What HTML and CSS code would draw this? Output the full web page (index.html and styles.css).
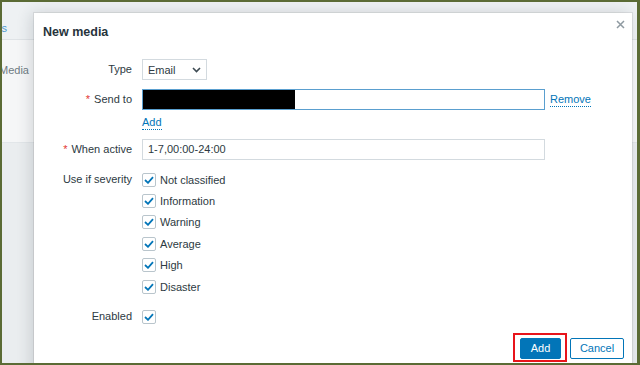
FILE: index.html
```html
<!DOCTYPE html>
<html lang="en">
<head>
    <meta charset="UTF-8">
    <meta name="viewport" content="width=device-width, initial-scale=1.0">
    <title>New media</title>
    <link rel="stylesheet" href="styles.css">
</head>
<body>
    <div class="screen">
        <!-- page behind the dialog -->
        <div class="page">
            <div class="page-tabs">
                <div class="tab-clip"><span class="tab-link">Users</span></div>
            </div>
            <div class="page-panel">
                <div class="page-label">Media</div>
            </div>
            <div class="page-rest"></div>
        </div>

        <!-- dialog -->
        <div class="modal">
            <div class="modal-header">
                <h4 class="modal-title">New media</h4>
                <div class="modal-close">
                    <svg width="9" height="9" viewBox="0 0 9 9"><path d="M1 1 L8 8 M8 1 L1 8" stroke="#8f9aa1" stroke-width="1.5" fill="none"/></svg>
                </div>
            </div>

            <div class="form-grid">
                <div class="form-label">Type</div>
                <div class="form-field">
                    <div class="select">
                        <span>Email</span>
                        <svg width="9" height="6" viewBox="0 0 9 6"><path d="M1 1 L4.5 4.5 L8 1" stroke="#3d4a52" stroke-width="1.6" fill="none"/></svg>
                    </div>
                </div>

                <div class="form-label"><span class="required">*</span>Send to</div>
                <div class="form-field column">
                    <div class="field-row">
                        <div class="text-box focused"><span class="redacted"></span></div>
                        <a class="link remove-link">Remove</a>
                    </div>
                    <a class="link add-link">Add</a>
                </div>

                <div class="form-label"><span class="required">*</span>When active</div>
                <div class="form-field">
                    <div class="text-box">1-7,00:00-24:00</div>
                </div>

                <div class="form-label severity-label">Use if severity</div>
                <div class="form-field column">
                    <div class="check-item"><span class="checkbox"><svg width="10" height="8" viewBox="0 0 10 8"><path d="M1 4 L4 6.8 L9 1.2" stroke="#0275b8" stroke-width="1.8" fill="none"/></svg></span>Not classified</div>
                    <div class="check-item"><span class="checkbox"><svg width="10" height="8" viewBox="0 0 10 8"><path d="M1 4 L4 6.8 L9 1.2" stroke="#0275b8" stroke-width="1.8" fill="none"/></svg></span>Information</div>
                    <div class="check-item"><span class="checkbox"><svg width="10" height="8" viewBox="0 0 10 8"><path d="M1 4 L4 6.8 L9 1.2" stroke="#0275b8" stroke-width="1.8" fill="none"/></svg></span>Warning</div>
                    <div class="check-item"><span class="checkbox"><svg width="10" height="8" viewBox="0 0 10 8"><path d="M1 4 L4 6.8 L9 1.2" stroke="#0275b8" stroke-width="1.8" fill="none"/></svg></span>Average</div>
                    <div class="check-item"><span class="checkbox"><svg width="10" height="8" viewBox="0 0 10 8"><path d="M1 4 L4 6.8 L9 1.2" stroke="#0275b8" stroke-width="1.8" fill="none"/></svg></span>High</div>
                    <div class="check-item"><span class="checkbox"><svg width="10" height="8" viewBox="0 0 10 8"><path d="M1 4 L4 6.8 L9 1.2" stroke="#0275b8" stroke-width="1.8" fill="none"/></svg></span>Disaster</div>
                </div>

                <div class="form-label severity-label">Enabled</div>
                <div class="form-field">
                    <div class="check-item"><span class="checkbox"><svg width="10" height="8" viewBox="0 0 10 8"><path d="M1 4 L4 6.8 L9 1.2" stroke="#0275b8" stroke-width="1.8" fill="none"/></svg></span></div>
                </div>
            </div>

            <div class="modal-footer">
                <button class="btn btn-primary">Add</button>
                <button class="btn btn-alt">Cancel</button>
            </div>
        </div>
    </div>
</body>
</html>
```

FILE: styles.css
```css
* {
    font-family: "Liberation Sans", Arial, sans-serif;
    box-sizing: border-box;
}

body {
    margin: 0;
    padding: 0;
    background: #5b6b35;
}

.screen {
    position: relative;
    width: 640px;
    height: 365px;
    border: 2px solid #5b6b35;
    border-right-width: 3px;
    overflow: hidden;
    background: #e9ecee;
}

/* page behind */
.page {
    display: flex;
    flex-direction: column;
    height: 100%;
}

.page-tabs {
    height: 38px;
    background: #eef1f3;
    border-bottom: 1px solid #dfe3e6;
    display: flex;
    align-items: flex-end;
    padding-bottom: 3px;
}

.tab-clip {
    width: 5px;
    display: flex;
    justify-content: flex-end;
}

.tab-link {
    white-space: nowrap;
    font-size: 11px;
    line-height: 16px;
    color: #4c9bd0;
}

.page-panel {
    height: 103px;
    background: #f5f6f7;
    border-bottom: 1px solid #e2e6e9;
    padding-top: 22px;
    display: flex;
}

.page-label {
    width: 27px;
    display: flex;
    justify-content: flex-end;
    white-space: nowrap;
    font-size: 11px;
    line-height: 16px;
    color: #6f7b83;
}

.page-rest {
    flex: 1;
    background: #eaedef;
}

/* dialog */
.modal {
    position: absolute;
    left: 32px;
    top: 11px;
    right: 5px;
    bottom: -20px;
    background: #ffffff;
    box-shadow: 0 0 0 1px rgba(0, 0, 0, 0.07), -3px 0 14px rgba(30, 45, 55, 0.16);
    color: #1f2c33;
}

.modal-header {
    position: relative;
    padding: 10px 9px 8px;
}

.modal-title {
    margin: 0;
    font-size: 12.5px;
    font-weight: bold;
    line-height: 18px;
    color: #27343c;
}

.modal-close {
    position: absolute;
    top: 7px;
    right: 7px;
    width: 9px;
    height: 9px;
    display: flex;
}

.form-grid {
    display: grid;
    grid-template-columns: 98px 1fr;
    column-gap: 10px;
    row-gap: 9px;
    padding-top: 10px;
}

.form-label {
    text-align: right;
    font-size: 11px;
    line-height: 21px;
    color: #2d3a42;
}

.severity-label {
    line-height: 21.4px;
}

.required {
    color: #e33734;
    margin-right: 4px;
}

.form-field {
    display: flex;
    font-size: 11px;
}

.form-field.column {
    flex-direction: column;
}

.field-row {
    display: flex;
    align-items: center;
}

.select {
    width: 65px;
    height: 21px;
    border: 1px solid #d3dadf;
    display: flex;
    align-items: center;
    justify-content: space-between;
    padding: 0 5px 0 5px;
    font-size: 11px;
    color: #2d3a42;
}

.text-box {
    width: 403px;
    height: 21px;
    border: 1px solid #d3dadf;
    padding: 0 5px;
    font-size: 11px;
    line-height: 19px;
    color: #2d3a42;
}

.text-box.focused {
    border-color: #5a9fcf;
    padding: 0;
}

.redacted {
    display: block;
    width: 152px;
    height: 100%;
    background: #000000;
}

.link {
    color: #0275b8;
    font-size: 11px;
    line-height: 14px;
    border-bottom: 1px dotted #0275b8;
    cursor: pointer;
}

.remove-link {
    margin-left: 5px;
}

.add-link {
    align-self: flex-start;
    margin-top: 5px;
}

.check-item {
    height: 21.4px;
    display: flex;
    align-items: center;
    gap: 4px;
    font-size: 11px;
    color: #2d3a42;
}

.checkbox {
    width: 14px;
    height: 14px;
    border: 1px solid #b9c5cc;
    border-radius: 2px;
    display: flex;
    align-items: center;
    justify-content: center;
    background: #ffffff;
}

.modal-footer {
    display: flex;
    justify-content: flex-end;
    gap: 9px;
    padding: 10px 8px 0;
}

.btn {
    height: 21px;
    padding: 0;
    border-radius: 2px;
    font-size: 11px;
    cursor: pointer;
}

.btn-primary {
    position: relative;
    width: 41px;
    background: #0275b8;
    border: 1px solid #0275b8;
    color: #ffffff;
}

/* red highlight frame around Add */
.btn-primary::after {
    content: '';
    position: absolute;
    top: -6px;
    bottom: -4px;
    left: -8px;
    right: -7px;
    border: 2px solid #e8141b;
}

.btn-alt {
    width: 54px;
    background: #ffffff;
    border: 1px solid #0275b8;
    color: #0275b8;
}
```
